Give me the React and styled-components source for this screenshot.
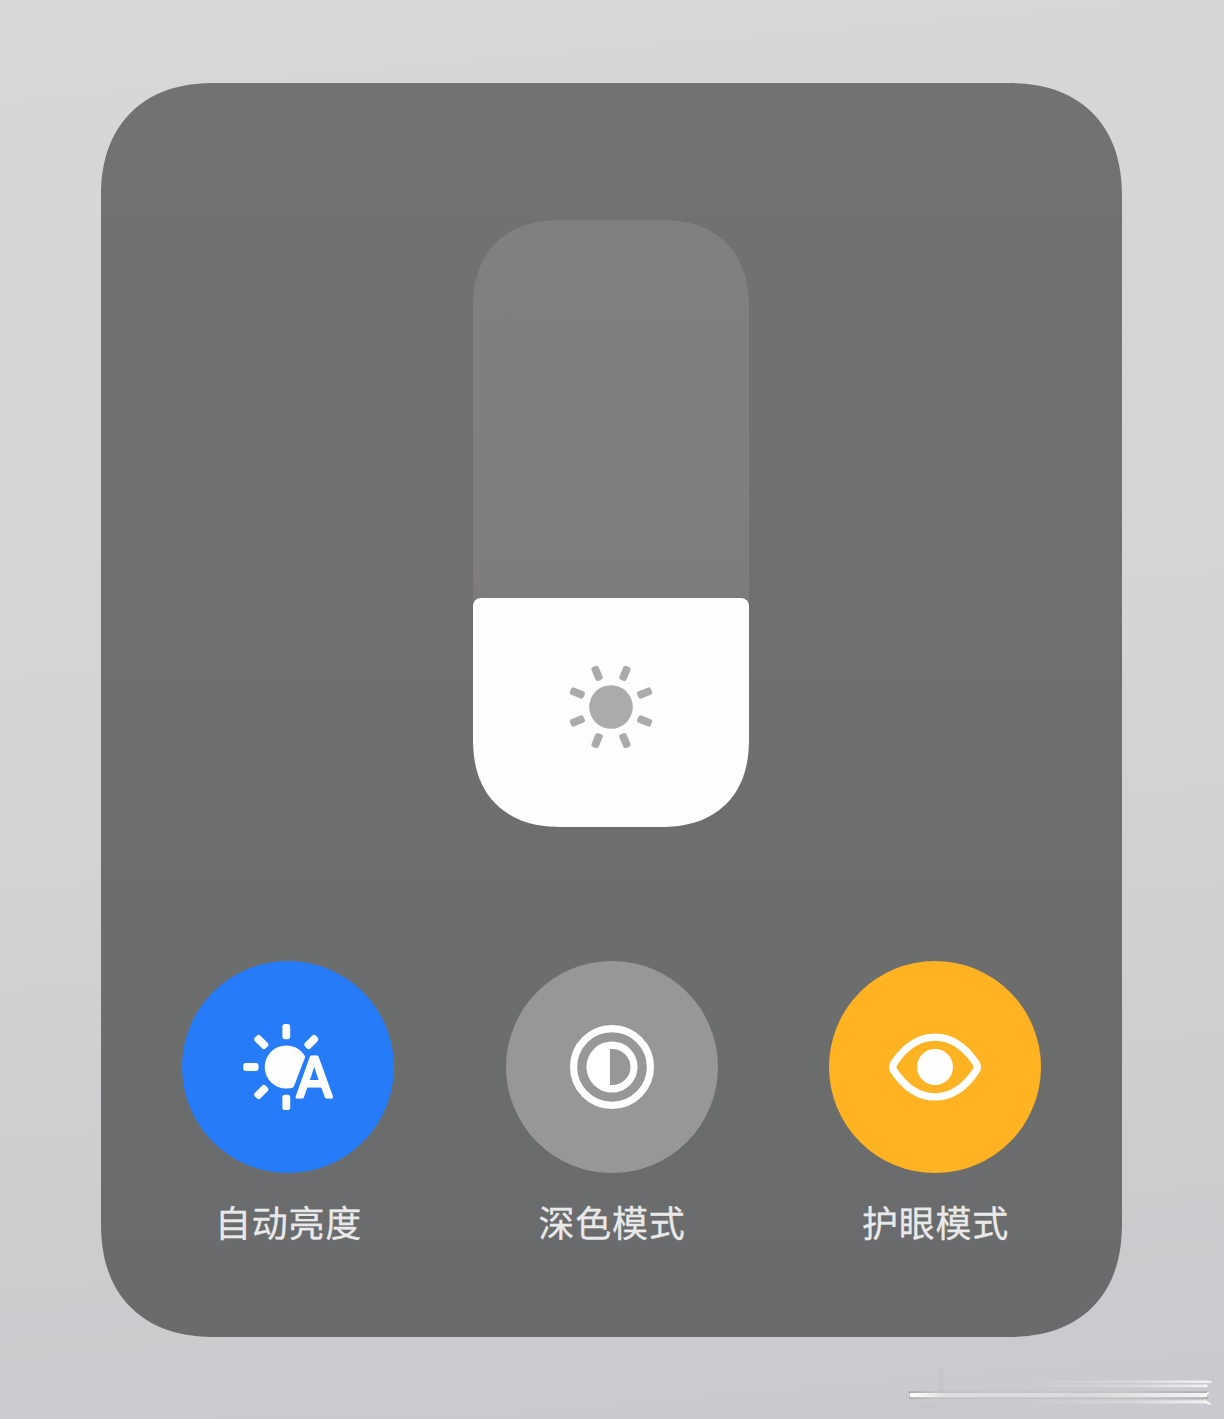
import React from 'react'
import styled, { createGlobalStyle } from 'styled-components'


const GlobalStyle = createGlobalStyle`
  * {
    box-sizing: border-box;
  }

  body {
    margin: 0;
    font-family: "Noto Sans CJK SC", "Noto Sans", sans-serif;
  }
`

const Page = styled.main`
  position: relative;
  width: 1224px;
  height: 1419px;
  padding: 83px 102px 82px 101px;
  background: linear-gradient(175deg, #d7d7d7 0%, #d4d4d4 50%, #cbccce 85%, #c9cacd 100%);
  overflow: hidden;
`

const Panel = styled.section`
  display: flex;
  flex-direction: column;
  align-items: center;
  height: 1254px;
  padding-top: 137px;
  border-radius: 114px;
  corner-shape: superellipse(1.2);
  background: linear-gradient(180deg, #727272 0%, #6f6f6f 50%, #6b6c6c 80%, #6a6b6c 100%);
`

const Track = styled.div`
  display: flex;
  align-items: flex-end;
  width: 276px;
  height: 607px;
  margin-right: 1px;
  border-radius: 88px;
  corner-shape: superellipse(1.2);
  background: linear-gradient(180deg, #808080 0%, #7f7f7f 45%, #7e7c7b 63.5%, transparent 64%);
`

const Fill = styled.div`
  display: flex;
  justify-content: center;
  width: 100%;
  padding-top: 49px;
  border-radius: 8px 8px 88px 88px;
  corner-shape: round round superellipse(1.2) superellipse(1.2);
  background: #fefefe;
`

const Toggles = styled.div`
  display: flex;
  justify-content: space-between;
  width: 859px;
  margin-top: 134px;
`

const Toggle = styled.div`
  display: flex;
  flex-direction: column;
  align-items: center;
  width: 212px;
`

const RoundButton = styled.button`
  display: flex;
  justify-content: center;
  align-items: center;
  width: 212px;
  height: 212px;
  padding: 0;
  border: none;
  border-radius: 50%;
  background: ${props => props.$color};
`

const Label = styled.span`
  margin-top: 22px;
  padding-left: 1px;
  color: #e9e9ea;
  font-size: 36px;
  line-height: 52px;
  letter-spacing: 0.7px;
  white-space: nowrap;
  -webkit-text-stroke: 0.3px #e9e9ea;
`

const Smudge = styled.svg`
  position: absolute;
  right: 0;
  bottom: 0;
`

const Rays = ({ angles, cx, cy, inner, length }) => angles.map(angle =>
  <rect
    key={angle}
    x={cx - 3.9}
    y={cy - inner - length}
    width="7.8"
    height={length}
    rx="2.6"
    transform={`rotate(${angle} ${cx} ${cy})`}
  />
)

const SunIcon = () => (
  <svg width="120" height="120" viewBox="0 0 120 120" fill="#ababab">
    <circle cx="60" cy="60" r="21.8" />
    <Rays angles={[22.5, 67.5, 112.5, 157.5, 202.5, 247.5, 292.5, 337.5]} cx={60} cy={60} inner={29} length={14.8} />
  </svg>
)

const AutoIcon = () => (
  <svg width="120" height="120" viewBox="0 0 120 120" fill="#fff">
    <clipPath id="sunCut">
      <path d="M0 0H96.5L64.5 83V120H0Z" />
    </clipPath>
    <circle cx="58.3" cy="60" r="21.6" clipPath="url(#sunCut)" />
    <Rays angles={[0, 45, 180, 225, 270, 315]} cx={58.3} cy={60} inner={27.8} length={15.2} />
    <text
      x="86.3"
      y="90.4"
      textAnchor="middle"
      fontFamily="Inter, sans-serif"
      fontSize="55"
      fontWeight="400"
      stroke="#fff"
      strokeWidth="3"
      strokeLinejoin="round"
      textLength="37.2"
      lengthAdjust="spacingAndGlyphs"
    >A</text>
  </svg>
)

const DarkIcon = () => (
  <svg width="120" height="120" viewBox="0 0 120 120">
    <circle cx="60" cy="60" r="38.4" fill="none" stroke="#fff" strokeWidth="7.2" />
    <circle cx="60" cy="60" r="25.6" fill="#fff" />
    <path d="M58 42H60A18.5 18 0 0 1 60 78H58Z" fill="#979797" />
  </svg>
)

const EyeIcon = () => (
  <svg width="120" height="120" viewBox="-60 -60 120 120">
    <path
      d="M-41.2 -3.6C-30 -20.5 -15.5 -29.9 0 -29.9S30 -20.5 41.2 -3.6Q43.4 0 41.2 3.6C30 20.5 15.5 29.9 0 29.9S-30 20.5 -41.2 3.6Q-43.4 0 -41.2 -3.6Z"
      fill="none"
      stroke="#fff"
      strokeWidth="7.4"
    />
    <circle r="18" fill="#fff" />
  </svg>
)

const toggles = [
  { label: '自动亮度', color: '#267bf8', Icon: AutoIcon },
  { label: '深色模式', color: '#979797', Icon: DarkIcon },
  { label: '护眼模式', color: '#ffb222', Icon: EyeIcon },
]

const App = () => {
  return (
    <>
      <GlobalStyle />
      <Page>
        <Panel>
          <Track>
            <Fill style={{ height: 229 }}>
              <SunIcon />
            </Fill>
          </Track>
          <Toggles>
            {toggles.map(({ label, color, Icon }) =>
              <Toggle key={label}>
                <RoundButton $color={color} aria-label={label}>
                  <Icon />
                </RoundButton>
                <Label>{label}</Label>
              </Toggle>
            )}
          </Toggles>
        </Panel>
        {/* faint streaks in the corner of the wallpaper */}
        <Smudge width="330" height="59" viewBox="0 0 330 59">
          <defs>
            <linearGradient id="streak" x1="0" x2="1" y1="0" y2="0">
              <stop offset="0" stopColor="#fff" />
              <stop offset="0.12" stopColor="#dedfe0" />
              <stop offset="0.6" stopColor="#d8d9da" />
              <stop offset="1" stopColor="#f4f4f4" />
            </linearGradient>
            <linearGradient id="fadeIn" x1="0" x2="1" y1="0" y2="0">
              <stop offset="0" stopColor="#fff" stopOpacity="0" />
              <stop offset="0.6" stopColor="#fff" stopOpacity="0.25" />
              <stop offset="1" stopColor="#fff" stopOpacity="0.75" />
            </linearGradient>
            <linearGradient id="shade" x1="0" x2="1" y1="0" y2="0">
              <stop offset="0" stopColor="#8c8d8f" stopOpacity="0.6" />
              <stop offset="0.1" stopColor="#a5a6a8" stopOpacity="0.2" />
              <stop offset="0.7" stopColor="#a5a6a8" stopOpacity="0.15" />
              <stop offset="1" stopColor="#8c8d8f" stopOpacity="0.5" />
            </linearGradient>
            <filter id="soft" x="-5%" y="-20%" width="110%" height="140%">
              <feGaussianBlur stdDeviation="0.7" />
            </filter>
          </defs>
          <rect x="44" y="9" width="6" height="24" fill="#bfc0c2" opacity="0.35" filter="url(#soft)" />
          <rect x="27" y="42" width="14" height="7" fill="#bfc0c2" opacity="0.3" filter="url(#soft)" />
          <g filter="url(#soft)">
            <rect x="15" y="31.2" width="299" height="2" fill="url(#shade)" />
            <rect x="15" y="37.2" width="299" height="1.8" fill="url(#shade)" />
            <rect x="16" y="33" width="297" height="4.2" fill="url(#streak)" />
            <rect x="130" y="20.4" width="183" height="2.6" fill="url(#fadeIn)" />
            <rect x="130" y="24.6" width="183" height="2.6" fill="url(#fadeIn)" />
            <rect x="130" y="40.4" width="183" height="3" fill="url(#fadeIn)" />
          </g>
          <path
            d="M311.5 21.8H317.5M311 26.6L313.5 25.2M311 35.8L314.5 32.3M311 41.4L316.5 44.2"
            fill="none"
            stroke="#fff"
            strokeWidth="1.6"
          />
        </Smudge>
      </Page>
    </>
  )
}

export default App
